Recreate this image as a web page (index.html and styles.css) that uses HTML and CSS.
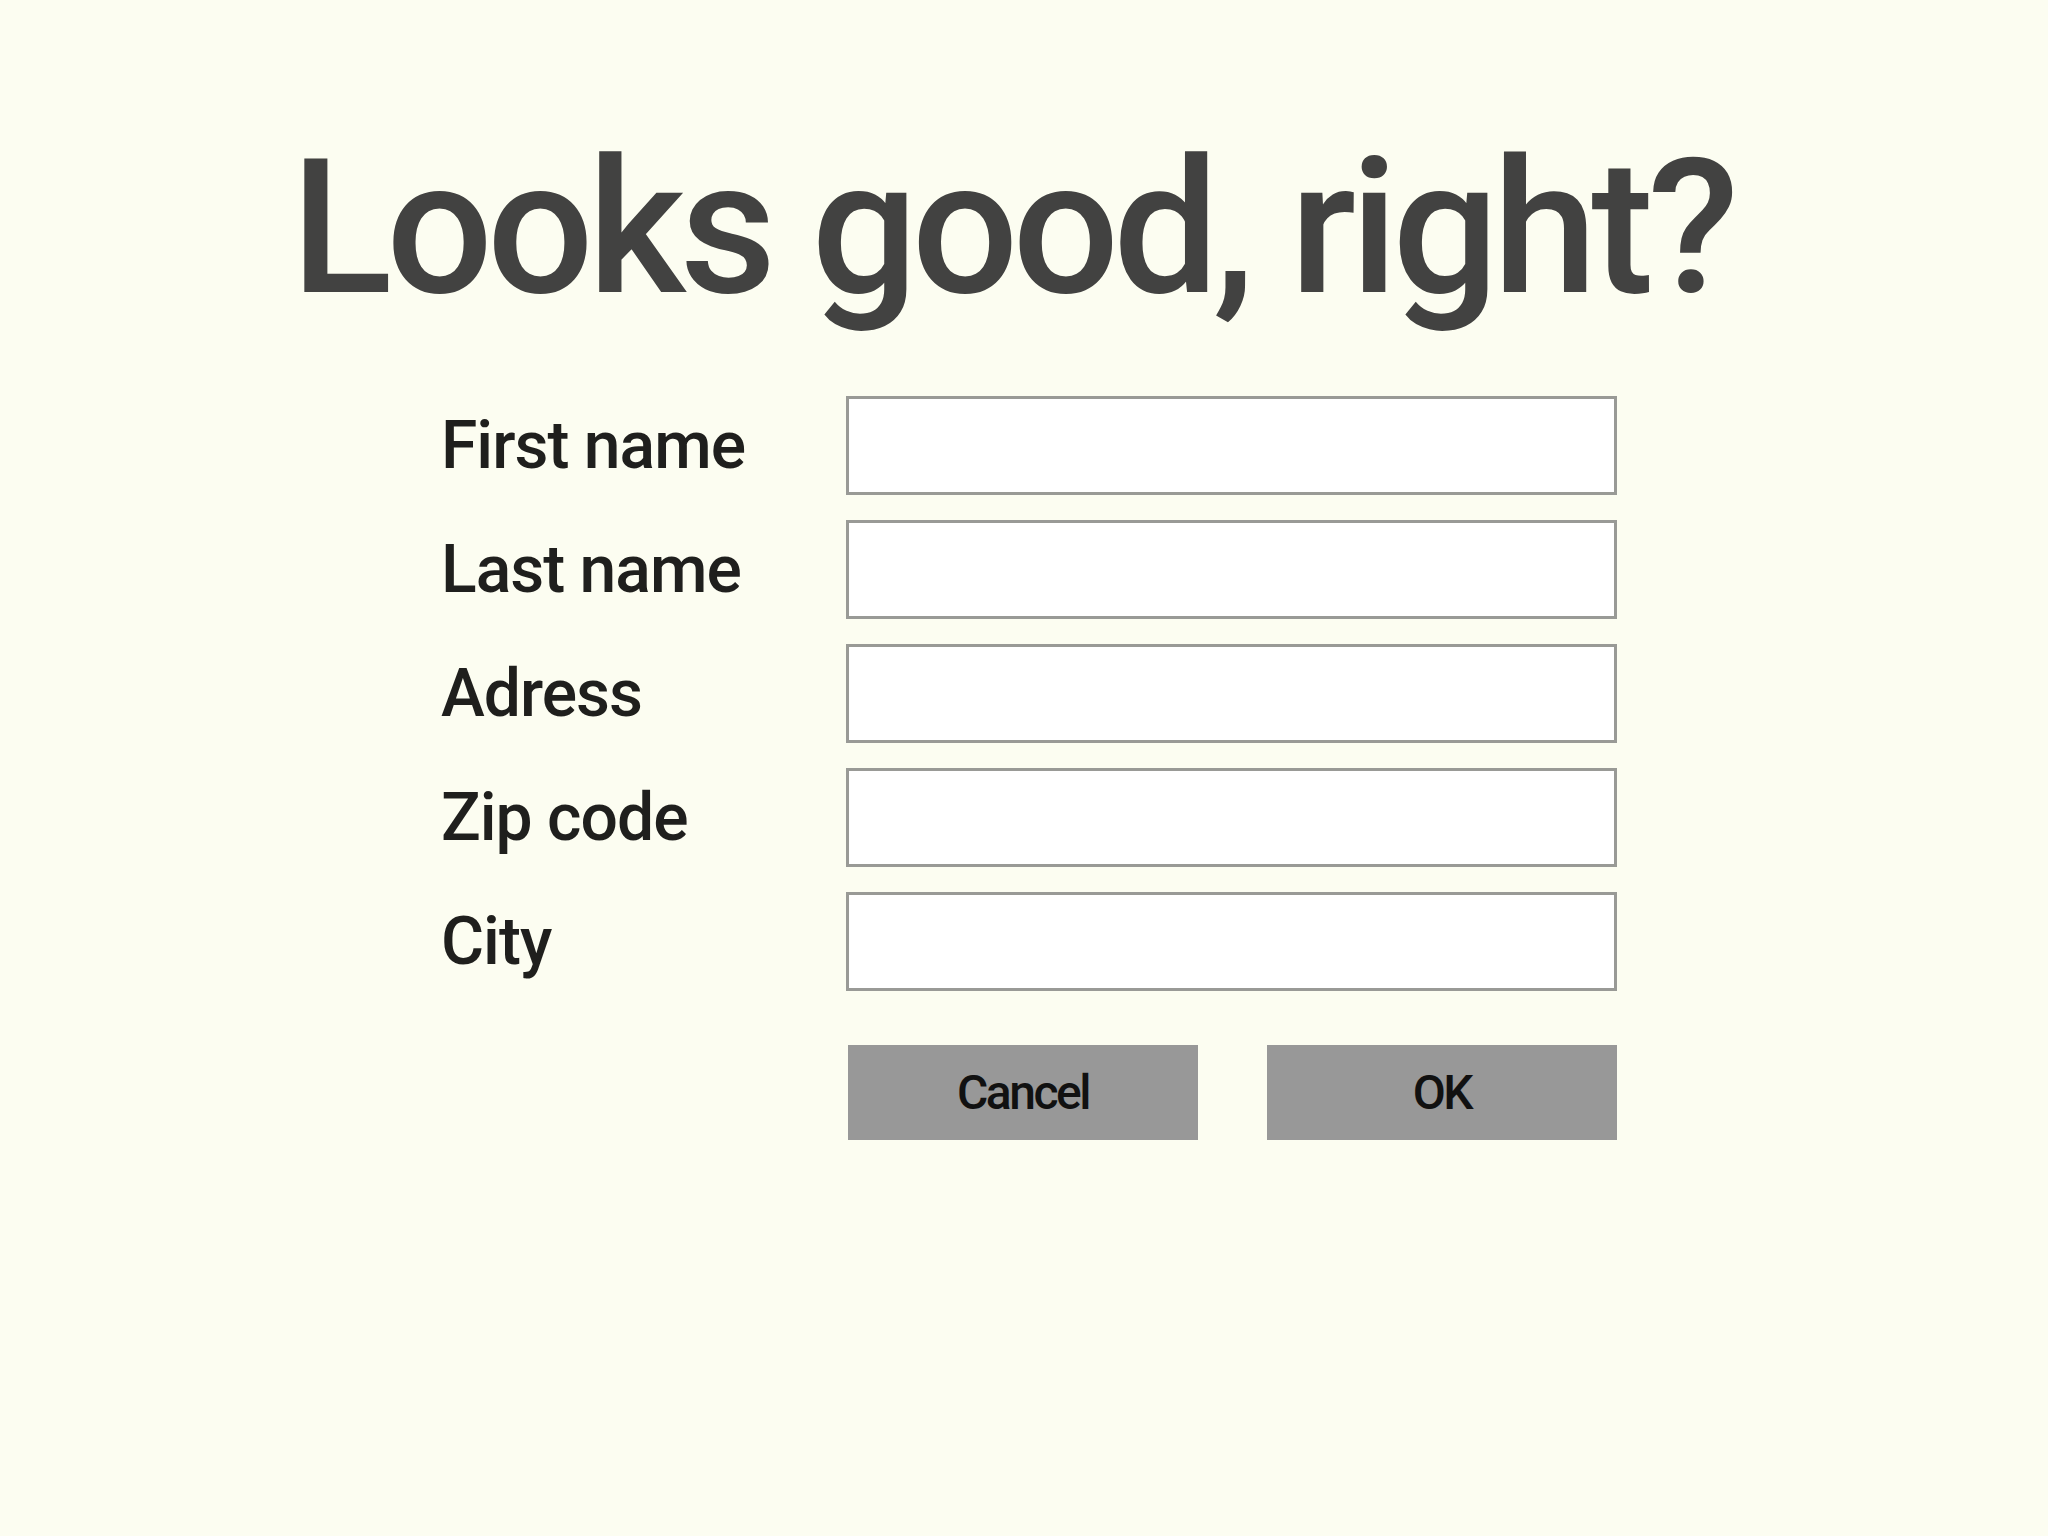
FILE: index.html
```html
<!DOCTYPE html>
<html lang="en">
<head>
    <meta charset="UTF-8">
    <meta name="viewport" content="width=device-width, initial-scale=1.0">
    <title>Looks good, right?</title>
    <link rel="stylesheet" href="styles.css">
</head>
<body>
    <h1 class="title">Looks good, right?</h1>

    <form class="form" onsubmit="return false">
        <div class="row">
            <label for="first-name">First name</label>
            <input type="text" id="first-name">
        </div>
        <div class="row">
            <label for="last-name">Last name</label>
            <input type="text" id="last-name">
        </div>
        <div class="row">
            <label for="address">Adress</label>
            <input type="text" id="address">
        </div>
        <div class="row">
            <label for="zip">Zip code</label>
            <input type="text" id="zip">
        </div>
        <div class="row">
            <label for="city">City</label>
            <input type="text" id="city">
        </div>

        <div class="row actions">
            <span></span>
            <div class="buttons">
                <button type="button">Cancel</button>
                <button type="submit">OK</button>
            </div>
        </div>
    </form>
</body>
</html>
```

FILE: styles.css
```css
* {
    margin: 0;
    padding: 0;
    box-sizing: border-box;
    font-family: 'Roboto', 'Liberation Sans', sans-serif;
}

body {
    background: #fcfdf1;
    min-height: 100vh;
}

.title {
    margin: 134px 0 74px;
    padding-right: 24px;
    font-size: 188px;
    line-height: 1;
    font-weight: 500;
    letter-spacing: -6px;
    color: #424241;
    text-align: center;
}

.form {
    width: 1176px;
    margin: 0 auto;
    padding-left: 5px;
    display: flex;
    flex-direction: column;
    gap: 25px;
}

.row {
    display: grid;
    grid-template-columns: 405px 771px;
    align-items: center;
}

label {
    font-size: 66px;
    font-weight: 500;
    letter-spacing: -1px;
    color: #1f1f1d;
}

input {
    height: 99px;
    width: 100%;
    border: 3px solid #999a96;
    background: #fff;
    font-size: 40px;
    padding: 0 16px;
    outline: none;
}

.actions {
    margin-top: 29px;
}

.buttons {
    display: flex;
    justify-content: space-between;
    padding-left: 2px;
}

button {
    width: 350px;
    height: 95px;
    border: none;
    background: #989898;
    color: #111;
    font-size: 48px;
    font-weight: 500;
    letter-spacing: -2.5px;
    cursor: pointer;
}
```
